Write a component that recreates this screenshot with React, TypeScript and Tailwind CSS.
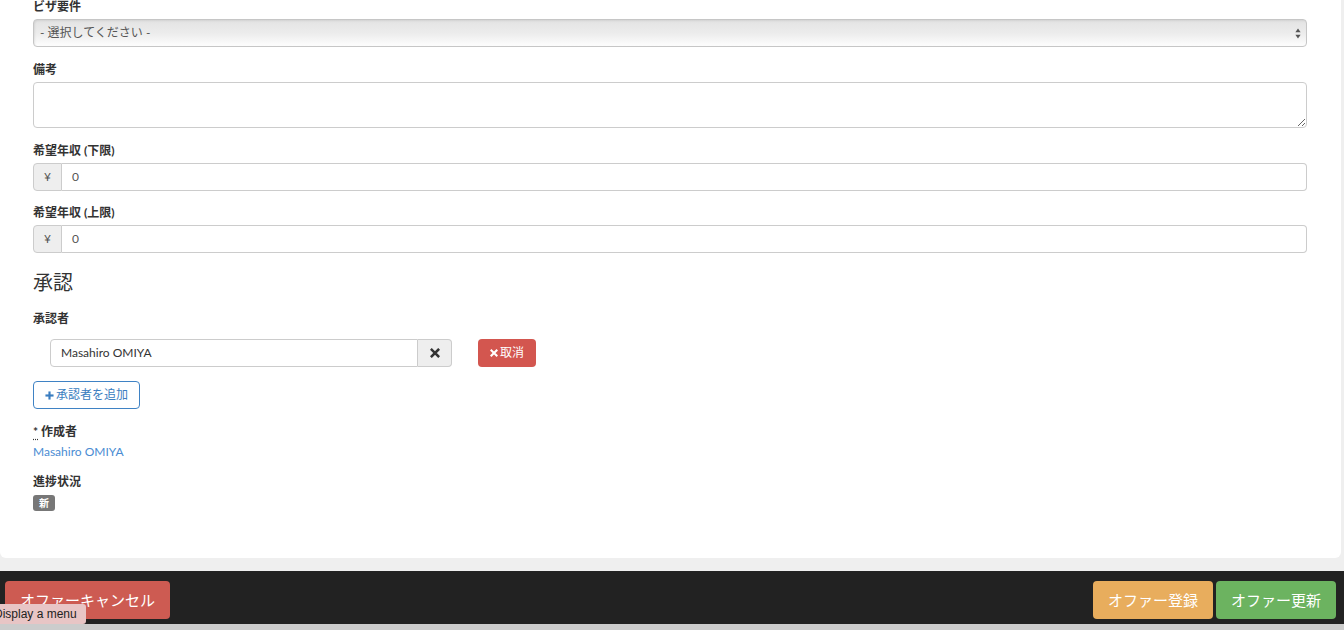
const Remove = ({ className }: { className?: string }) => (
  <svg viewBox="0 0 10 10" className={className} fill="none">
    <path d="M1.8 1.8 8.2 8.2M8.2 1.8 1.8 8.2" stroke="currentColor" strokeWidth="2.6" strokeLinecap="square" />
  </svg>
);

const Plus = ({ className }: { className?: string }) => (
  <svg viewBox="0 0 10 10" className={className} fill="currentColor">
    <rect x="3.8" y="0.5" width="2.4" height="9" />
    <rect x="0.5" y="3.8" width="9" height="2.4" />
  </svg>
);

const Label = ({ children, className = "" }: { children: React.ReactNode; className?: string }) => (
  <div className={"text-[12px] leading-[17px] font-bold text-[#333] " + className}>{children}</div>
);

const YenInput = ({ value }: { value: string }) => (
  <div className="flex h-[28px] w-full">
    <div className="flex w-[29px] items-center justify-center rounded-l-[4px] border border-[#ccc] bg-[#eee] text-[12px] text-[#555]">
      ¥
    </div>
    <div className="flex flex-1 items-center rounded-r-[4px] border border-l-0 border-[#ccc] bg-white pl-[10px] text-[12px] text-[#555]">
      {value}
    </div>
  </div>
);

export default function App() {
  return (
    <div className="relative flex h-[630px] w-[1344px] flex-col overflow-hidden bg-[#efefef] font-['Lato','Noto_Sans_CJK_JP',sans-serif]">
      <div className="mr-[3px] rounded-b-[6px] bg-white pl-[33px] pr-[34px] pb-[47px]">
        <Label className="-mt-[2px] mb-[4px]">ビザ要件</Label>
        <div className="flex h-[28px] items-center justify-between rounded-[4px] border border-[#c6c6c6] bg-gradient-to-b from-[#e3e3e3] via-[#ececec] to-[#fdfdfd] pl-[6px] pr-[5px] text-[12px] text-[#555] shadow-[inset_1px_1px_2px_rgba(0,0,0,0.08)]">
          <span>- 選択してください -</span>
          <svg viewBox="0 0 6 11" className="h-[11px] w-[6px] text-[#555]" fill="currentColor">
            <path d="M3 0.5 5.6 4.3H0.4Z" />
            <path d="M3 10.5 5.6 6.7H0.4Z" />
          </svg>
        </div>

        <Label className="mt-[14px] mb-[4px]">備考</Label>
        <textarea className="block h-[46px] w-full rounded-[4px] border border-[#ccc] bg-white" />

        <Label className="mt-[14px] mb-[4px]">希望年収 (下限)</Label>
        <YenInput value="0" />

        <Label className="mt-[13px] mb-[4px]">希望年収 (上限)</Label>
        <YenInput value="0" />

        <h3 className="mt-[18px] text-[20px] leading-[22px] text-[#333]">承認</h3>

        <Label className="mt-[17px]">承認者</Label>
        <div className="mt-[12px] ml-[17px] flex items-center">
          <div className="flex h-[28px] w-[368px] items-center rounded-l-[4px] border border-[#ccc] bg-white pl-[10px] text-[12px] text-[#333]">
            Masahiro OMIYA
          </div>
          <div className="flex h-[28px] w-[34px] items-center justify-center rounded-r-[4px] border border-l-0 border-[#ccc] bg-[#eee] text-[#333]">
            <Remove className="h-[10px] w-[10px]" />
          </div>
          <button className="ml-[26px] flex h-[28px] w-[58px] items-center justify-center gap-[2px] rounded-[4px] bg-[#d3564f] text-[12px] text-white">
            <Remove className="h-[8px] w-[8px]" />
            取消
          </button>
        </div>

        <button className="mt-[14px] flex h-[28px] w-[107px] items-center justify-center gap-[2px] rounded-[4px] border border-[#3f82c4] bg-white text-[12px] text-[#3a7dc0]">
          <Plus className="h-[9px] w-[9px]" />
          承認者を追加
        </button>

        <Label className="mt-[14px]">
          <abbr className="underline decoration-dotted underline-offset-[3px]">*</abbr> 作成者
        </Label>
        <div className="mt-[3px] text-[12px] leading-[17px] text-[#4a8cd3]">Masahiro OMIYA</div>

        <Label className="mt-[13px]">進捗状況</Label>
        <div className="mt-[5px] flex h-[16px] w-[22px] items-center justify-center rounded-[3px] bg-[#777] text-[10px] font-bold text-white">
          新
        </div>
      </div>

      <div className="mt-[13px] flex h-[53px] items-start justify-between bg-[#222] pt-[10px] pl-[5px] pr-[8px]">
        <button className="h-[38px] w-[165px] rounded-[4px] bg-[#cd5b52] text-[15px] text-white">
          オファーキャンセル
        </button>
        <div className="flex gap-[3px]">
          <button className="h-[38px] w-[120px] rounded-[4px] bg-[#e8ad5d] text-[15px] text-white">オファー登録</button>
          <button className="h-[38px] w-[120px] rounded-[4px] bg-[#6cb360] text-[15px] text-white">オファー更新</button>
        </div>
      </div>
      <div className="flex-1 bg-[#cccccc]" />

      <div className="absolute left-[-8px] top-[604px] flex h-[20px] w-[94px] items-center rounded-[3px] bg-[#e8c5c5] pl-[2px] font-['Liberation_Sans',sans-serif] text-[12px] text-[#222]">
        Display a menu
      </div>
    </div>
  );
}
